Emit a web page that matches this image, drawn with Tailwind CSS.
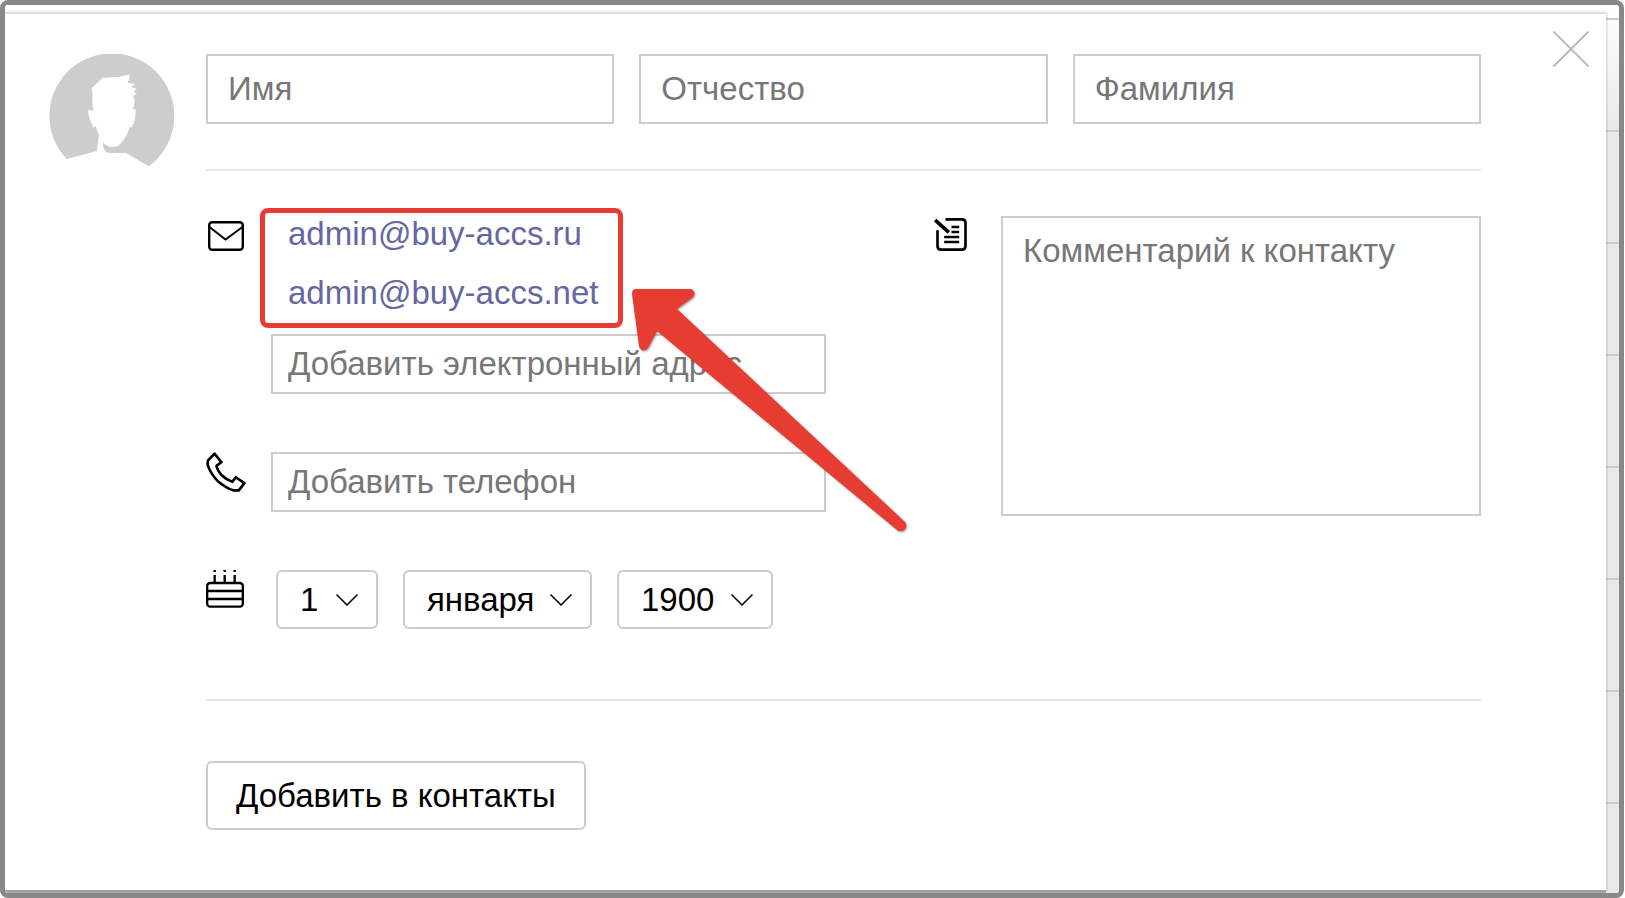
<!DOCTYPE html>
<html lang="ru">
<head>
<meta charset="utf-8">
<title>Контакт</title>
<script src="https://cdn.jsdelivr.net/npm/@tailwindcss/browser@4"></script>
</head>
<body class="bg-white font-['Liberation_Sans',Arial,sans-serif] text-[33px] text-black">
<div class="relative mr-px flex min-h-screen flex-col overflow-hidden rounded-lg border-5 border-[#888] bg-[#ececec]">
  <!-- list behind the dialog -->
  <div class="absolute inset-0 flex flex-col gap-[110px] bg-linear-to-b from-white to-[#e8e8e8] to-[130px] pt-[13px]" aria-hidden="true">
    <div class="h-0.5 shrink-0 bg-[#ccc]"></div><div class="h-0.5 shrink-0 bg-[#ccc]"></div><div class="h-0.5 shrink-0 bg-[#ccc]"></div><div class="h-0.5 shrink-0 bg-[#ccc]"></div><div class="h-0.5 shrink-0 bg-[#ccc]"></div><div class="h-0.5 shrink-0 bg-[#ccc]"></div><div class="h-0.5 shrink-0 bg-[#ccc]"></div><div class="h-0.5 shrink-0 bg-[#ccc]"></div>
  </div>
  <div class="relative mr-[13px] h-[9px] bg-linear-to-b from-white from-40% to-[#f0f0f0]"></div>
  <main class="relative mr-[13px] mb-[3px] flex grow gap-8 bg-white pt-10 pr-[125px] pb-[60px] pl-11 shadow-[0_0_0_2px_rgba(0,0,0,0.08),0_3px_0_rgba(0,0,0,0.25)]">
    <svg class="h-[113px] w-[125px] shrink-0" viewBox="147 162 375 339" aria-hidden="true"><path fill="#cdcdcd" d="M200 477A187.500 187.500 0 1 1 446 499L378 459H325Q308 452 309 426Q320 441 336 441Q352 441 360 433Q382 410 389 380L394 383Q407 365 407 328L399 328L404 306L400 286L410 284L401 273L411 268L393 260L407 252L383 248Q390 236 389 223L358 231L308 233L275 265Q279 280 277 300Q278 325 281 332L264 330Q264 350 280 383L288 378Q290 395 297 404L291 453Z"/></svg>
    <form class="min-w-0 grow">
      <div class="grid grid-cols-3 gap-[25px]">
        <input aria-label="Имя" placeholder="Имя" class="h-[70px] min-w-0 border-2 border-[#ccc] px-5 placeholder:text-[#777]">
        <input aria-label="Отчество" placeholder="Отчество" class="h-[70px] min-w-0 border-2 border-[#ccc] px-5 placeholder:text-[#777]">
        <input aria-label="Фамилия" placeholder="Фамилия" class="h-[70px] min-w-0 border-2 border-[#ccc] px-5 placeholder:text-[#777]">
      </div>
      <hr class="mt-[45px] border-t-2 border-[#e5e5e5]">
      <div class="grid grid-cols-[620fr_547fr] gap-[108px] pt-[33px]">
        <div class="flex min-w-0 flex-col gap-[58px]">
          <div class="flex">
            <div class="w-[65px] shrink-0 pt-[17px] pl-0.5">
              <svg class="h-[30px] w-9" viewBox="0 0 36 30" fill="none" stroke="#000" stroke-width="2.400" aria-hidden="true"><rect x="1.200" y="1.200" width="33.600" height="27.600" rx="3"/><path d="M1.500 6L17.500 18.500L34.500 6" stroke-width="2"/></svg>
            </div>
            <div class="relative min-w-0 grow">
              <ul class="pl-[17px] leading-[59px] text-[#65679f]">
                <li><a href="mailto:admin@buy-accs.ru">admin@buy-accs.ru</a></li>
                <li><a href="mailto:admin@buy-accs.net">admin@buy-accs.net</a></li>
              </ul>
              <input type="email" aria-label="Добавить электронный адрес" placeholder="Добавить электронный адрес" class="mt-3 block h-[60px] w-full border-2 border-[#ccc] px-[15px] placeholder:text-[#777]">
              <!-- callout frame and arrow -->
              <div class="pointer-events-none absolute top-1 -left-[11px] h-[120px] w-[363px] rounded-lg border-5 border-[#e63c32]"></div>
              <svg class="pointer-events-none absolute top-[81px] left-[359px] z-10 h-[250px] w-[280px] drop-shadow-[1px_1px_1px_rgba(0,0,0,0.4)]" viewBox="0 0 280 250" aria-hidden="true"><path fill="#e63c32" d="M6 4H59C65 4 66 10 62 13L47 24L275 237C279 242 273 249 267 245L27 46L18 63C15 67 10 66 9 61L2 9Q2 4 6 4Z"/></svg>
            </div>
          </div>
          <div class="flex">
            <div class="w-[65px] shrink-0">
              <svg class="h-10 w-10" viewBox="47 65 120 122" fill="none" stroke="#000" stroke-width="8" stroke-linejoin="round" aria-hidden="true"><path d="M72 70L93 96L78 107Q80 120 94 136Q108 150 126 156L137 142L163 160L146 182H130Q113 179 84 156Q62 134 54 112Q49 102 52 91Z"/></svg>
            </div>
            <input type="tel" aria-label="Добавить телефон" placeholder="Добавить телефон" class="h-[60px] min-w-0 grow border-2 border-[#ccc] px-[15px] placeholder:text-[#777]">
          </div>
          <div class="flex">
            <div class="w-[70px] shrink-0">
              <svg class="h-[38px] w-[38px]" viewBox="48 417 114 114" fill="none" stroke="#000" stroke-width="7" aria-hidden="true"><rect x="51.500" y="456" width="107" height="71" rx="9"/><path d="M51 480H158M51 504H158"/><path d="M74 432V454M104 432V454M134 432V454M74 417V423M104 417V423M134 417V423"/></svg>
            </div>
            <div class="flex gap-[25px]">
              <div class="relative">
                <select aria-label="День" class="block h-[59px] w-[102px] appearance-none rounded-md border-2 border-[#ccc] bg-white pl-[22px]"><option>1</option></select>
                <svg class="pointer-events-none absolute top-6 right-5 h-3 w-[22px]" viewBox="0 0 22 12" fill="none" stroke="#000" stroke-width="1.500" aria-hidden="true"><path d="M.5 .5L11 11L21.500 .5"/></svg>
              </div>
              <div class="relative">
                <select aria-label="Месяц" class="block h-[59px] w-[189px] appearance-none rounded-md border-2 border-[#ccc] bg-white pl-[22px]"><option>января</option></select>
                <svg class="pointer-events-none absolute top-6 right-5 h-3 w-[22px]" viewBox="0 0 22 12" fill="none" stroke="#000" stroke-width="1.500" aria-hidden="true"><path d="M.5 .5L11 11L21.500 .5"/></svg>
              </div>
              <div class="relative">
                <select aria-label="Год" class="block h-[59px] w-[156px] appearance-none rounded-md border-2 border-[#ccc] bg-white pl-[22px]"><option>1900</option></select>
                <svg class="pointer-events-none absolute top-6 right-5 h-3 w-[22px]" viewBox="0 0 22 12" fill="none" stroke="#000" stroke-width="1.500" aria-hidden="true"><path d="M.5 .5L11 11L21.500 .5"/></svg>
              </div>
            </div>
          </div>
        </div>
        <div class="flex min-w-0 gap-[34px] pt-3">
          <svg class="mt-0.5 h-[33px] w-[33px] shrink-0" viewBox="101 84 98 99" fill="none" stroke="#000" stroke-width="7" aria-hidden="true"><path d="M111 121V168Q111 179 122 179H184Q195 179 195 168V99Q195 88 184 88H135" stroke-width="8"/><path d="M153 111H176M153 126H176M131 141H176M131 156H176"/><path d="M104 90L145 127" stroke-width="11"/></svg>
          <textarea aria-label="Комментарий к контакту" placeholder="Комментарий к контакту" class="h-[300px] min-w-0 grow resize-none border-2 border-[#ccc] px-5 py-3 leading-[42px] placeholder:text-[#777]"></textarea>
        </div>
      </div>
      <hr class="mt-[70px] border-t-2 border-[#e5e5e5]">
      <button type="button" class="mt-[60px] block h-[69px] rounded-md border-2 border-[#ccc] px-7">Добавить в контакты</button>
    </form>
    <button type="button" aria-label="Закрыть" class="absolute top-[17px] right-[17px] h-9 w-9"><svg class="h-9 w-9" viewBox="0 0 36 36" stroke="#bbb" stroke-width="2" aria-hidden="true"><path d="M.5 .5L35.500 35.500M35.500 .5L.5 35.500"/></svg></button>
  </main>
</div>
</body>
</html>
